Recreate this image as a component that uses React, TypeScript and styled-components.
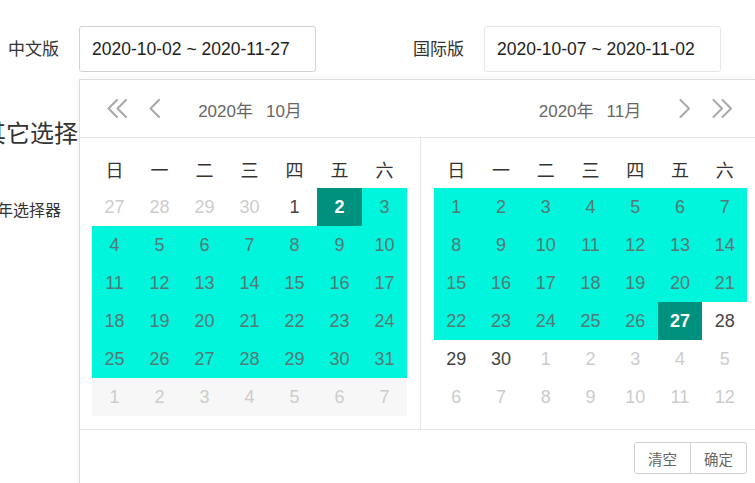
import React from "react";
import styled, { createGlobalStyle } from "styled-components";

const GlobalStyle = createGlobalStyle`
  html, body { margin: 0; padding: 0; background: #fff; }
  body {
    font-family: "Liberation Sans", "Noto Sans CJK SC", Arial, sans-serif;
    color: #333;
    overflow: hidden;
  }
  * { box-sizing: border-box; }
`;

const Page = styled.div`
  position: relative;
  width: 755px;
  height: 483px;
  padding: 26px 0 0 8px;
  overflow: hidden;
`;

const FieldRow = styled.div`
  display: flex;
  align-items: center;
  gap: 97px;
`;

const Field = styled.div`
  display: flex;
  align-items: center;
  gap: 20px;
`;

const Label = styled.span`
  font-size: 17px;
  color: #333;
  line-height: 1;
`;

const DateInput = styled.div<{ $focused?: boolean }>`
  width: 237px;
  height: 46px;
  display: flex;
  align-items: center;
  padding: 0 12px;
  border: 1px solid ${(p) => (p.$focused ? "#d2d2d2" : "#e6e6e6")};
  border-radius: 3px;
  font-size: 17.5px;
  color: #222;
  white-space: nowrap;
`;

const SectionTitle = styled.div`
  margin: 47px 0 0 -26px;
  font-size: 24px;
  line-height: 30px;
  color: #333;
  white-space: nowrap;
`;

const SubLabel = styled.div`
  margin: 50px 0 0 -11px;
  font-size: 16px;
  line-height: 24px;
  color: #333;
  white-space: nowrap;
`;

const Popup = styled.div`
  position: absolute;
  top: 79px;
  left: 79px;
  width: 682px;
  background: #fff;
  border: 1px solid #dcdcdc;
  box-shadow: 0 2px 8px rgba(0, 0, 0, 0.06);
  z-index: 10;
`;

const HeaderRow = styled.div`
  display: flex;
  height: 58px;
  border-bottom: 1px solid #e4e4e4;
`;

const HeaderHalf = styled.div`
  width: 340px;
  display: grid;
  grid-template-columns: 1fr auto 1fr;
  align-items: center;
  padding: 0 27px;
`;

const NavGroup = styled.div<{ $end?: boolean }>`
  display: flex;
  align-items: center;
  gap: 21px;
  justify-self: ${(p) => (p.$end ? "end" : "start")};
`;

const Title = styled.div`
  display: flex;
  gap: 13px;
  font-size: 17px;
  color: #666;
  white-space: nowrap;
  padding-top: 2px;
`;

const Body = styled.div`
  display: flex;
`;

const Calendar = styled.div<{ $right?: boolean }>`
  width: 340px;
  padding: ${(p) => (p.$right ? "12px 13px 13px" : "12px 13px 13px 12px")};
  border-left: ${(p) => (p.$right ? "1px solid #e4e4e4" : "none")};
`;

const Grid = styled.div`
  display: grid;
  grid-template-columns: repeat(7, 1fr);
`;

const WeekDay = styled.div`
  height: 38px;
  display: flex;
  align-items: center;
  justify-content: center;
  font-size: 18px;
  color: #333;
`;

type Kind = "other" | "normal" | "range" | "selected" | "hover";

const Cell = styled.div<{ $kind: Kind }>`
  height: 38px;
  display: flex;
  align-items: center;
  justify-content: center;
  font-size: 18px;
  background: ${(p) =>
    p.$kind === "range"
      ? "#00f5dc"
      : p.$kind === "selected"
      ? "#00917e"
      : p.$kind === "hover"
      ? "#f7f7f7"
      : "transparent"};
  color: ${(p) =>
    p.$kind === "other" || p.$kind === "hover"
      ? "#cccccc"
      : p.$kind === "range"
      ? "#557873"
      : p.$kind === "selected"
      ? "#ffffff"
      : "#444"};
  font-weight: ${(p) => (p.$kind === "selected" ? 700 : 400)};
`;

const Footer = styled.div`
  border-top: 1px solid #e4e4e4;
  display: flex;
  justify-content: flex-end;
  padding: 12px 13px 12px;
`;

const ButtonGroup = styled.div`
  display: flex;
`;

const Button = styled.button<{ $first?: boolean }>`
  width: ${(p) => (p.$first ? "57px" : "56px")};
  height: 32px;
  background: #fff;
  border: 1px solid #d0d0d0;
  border-left-width: ${(p) => (p.$first ? "1px" : "0")};
  border-radius: ${(p) => (p.$first ? "3px 0 0 3px" : "0 3px 3px 0")};
  font-family: "Noto Sans CJK SC", sans-serif;
  font-size: 14.5px;
  color: #666;
  padding: 0;
  cursor: pointer;
`;

const Chevron = ({ dir, double }: { dir: "left" | "right"; double?: boolean }) => {
  const w = double ? 21 : 12;
  const single = (x: number) =>
    dir === "left"
      ? `M${x + 10} 1 L${x + 1.5} 9.5 L${x + 10} 18`
      : `M${x + 1.5} 1 L${x + 10} 9.5 L${x + 1.5} 18`;
  const d = double ? `${single(0)} ${single(9)}` : single(0);
  return (
    <svg width={w} height={19} viewBox={`0 0 ${w} 19`} fill="none">
      <path d={d} stroke="#a8a8a8" strokeWidth={2} strokeLinecap="round" strokeLinejoin="round" />
    </svg>
  );
};

const WEEK = ["日", "一", "二", "三", "四", "五", "六"];

type Day = { n: number; kind: Kind };

const octDays: Day[] = [
  ...[27, 28, 29, 30].map((n) => ({ n, kind: "other" as Kind })),
  { n: 1, kind: "normal" },
  { n: 2, kind: "selected" },
  ...Array.from({ length: 29 }, (_, i) => ({ n: i + 3, kind: "range" as Kind })),
  ...Array.from({ length: 7 }, (_, i) => ({ n: i + 1, kind: "hover" as Kind })),
];

const novDays: Day[] = [
  ...Array.from({ length: 26 }, (_, i) => ({ n: i + 1, kind: "range" as Kind })),
  { n: 27, kind: "selected" },
  { n: 28, kind: "normal" },
  { n: 29, kind: "normal" },
  { n: 30, kind: "normal" },
  ...Array.from({ length: 12 }, (_, i) => ({ n: i + 1, kind: "other" as Kind })),
];

const Month = ({ days, right }: { days: Day[]; right?: boolean }) => (
  <Calendar $right={right}>
    <Grid>
      {WEEK.map((w) => (
        <WeekDay key={w}>{w}</WeekDay>
      ))}
      {days.map((d, i) => (
        <Cell key={i} $kind={d.kind}>
          {d.n}
        </Cell>
      ))}
    </Grid>
  </Calendar>
);

export default function App() {
  return (
    <>
      <GlobalStyle />
      <Page>
        <FieldRow>
          <Field>
            <Label>中文版</Label>
            <DateInput $focused>2020-10-02 ~ 2020-11-27</DateInput>
          </Field>
          <Field>
            <Label>国际版</Label>
            <DateInput>2020-10-07 ~ 2020-11-02</DateInput>
          </Field>
        </FieldRow>
        <SectionTitle>其它选择</SectionTitle>
        <SubLabel>年选择器</SubLabel>

        <Popup>
          <HeaderRow>
            <HeaderHalf>
              <NavGroup>
                <Chevron dir="left" double />
                <Chevron dir="left" />
              </NavGroup>
              <Title>
                <span>2020年</span>
                <span>10月</span>
              </Title>
              <span />
            </HeaderHalf>
            <HeaderHalf>
              <span />
              <Title>
                <span>2020年</span>
                <span>11月</span>
              </Title>
              <NavGroup $end>
                <Chevron dir="right" />
                <Chevron dir="right" double />
              </NavGroup>
            </HeaderHalf>
          </HeaderRow>
          <Body>
            <Month days={octDays} />
            <Month days={novDays} right />
          </Body>
          <Footer>
            <ButtonGroup>
              <Button $first>清空</Button>
              <Button>确定</Button>
            </ButtonGroup>
          </Footer>
        </Popup>
      </Page>
    </>
  );
}
